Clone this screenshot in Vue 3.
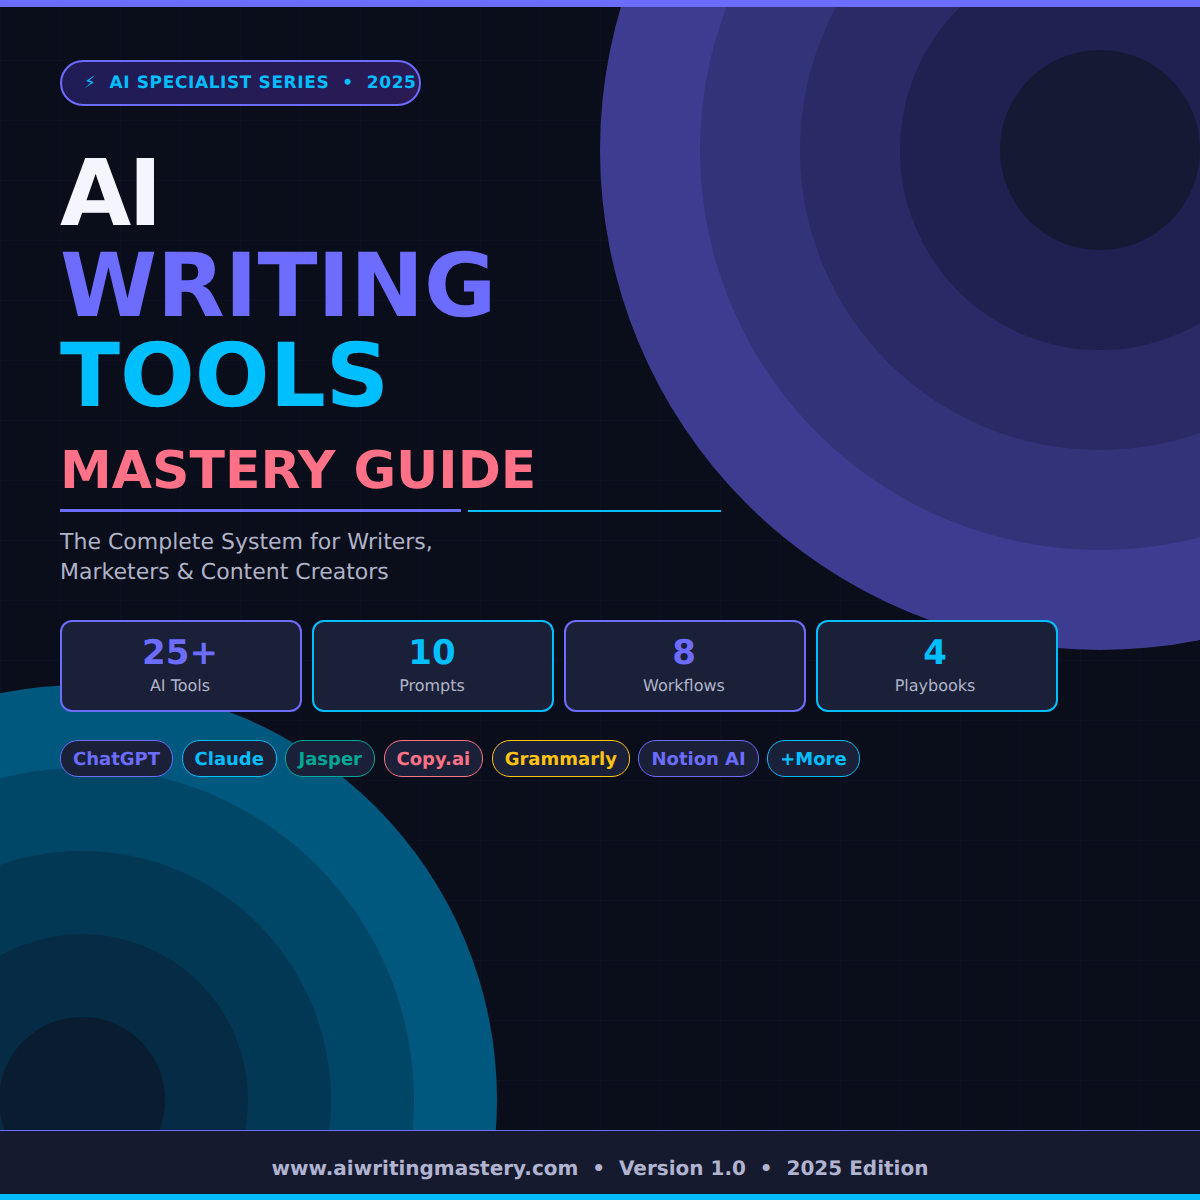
<template>
  <div class="poster">
    <div class="rings rings-purple">
      <div v-for="r in purpleRings" :key="r.size" class="ring" :style="ringStyle(r)"></div>
    </div>
    <div class="rings rings-teal">
      <div v-for="r in tealRings" :key="r.size" class="ring" :style="ringStyle(r)"></div>
    </div>

    <div class="top-bar"></div>

    <main class="content">
      <div class="badge">⚡&nbsp; AI SPECIALIST SERIES &nbsp;•&nbsp; 2025</div>

      <h1 class="title">
        <span class="t-white">AI</span>
        <span class="t-purple">WRITING</span>
        <span class="t-cyan">TOOLS</span>
      </h1>
      <h2 class="subtitle">MASTERY GUIDE</h2>

      <div class="rule">
        <span class="rule-a"></span>
        <span class="rule-b"></span>
      </div>

      <p class="desc">The Complete System for Writers,<br />Marketers &amp; Content Creators</p>

      <div class="stats">
        <div v-for="s in stats" :key="s.label" class="stat" :class="s.tone">
          <div class="stat-num">{{ s.num }}</div>
          <div class="stat-label">{{ s.label }}</div>
        </div>
      </div>

      <div class="tags">
        <span v-for="t in tags" :key="t.name" class="tag" :class="t.tone">{{ t.name }}</span>
      </div>
    </main>

    <footer class="footer">www.aiwritingmastery.com &nbsp;•&nbsp; Version 1.0 &nbsp;•&nbsp; 2025 Edition</footer>
    <div class="bottom-bar"></div>
  </div>
</template>

<script setup>
const purpleRings = [
  { size: 1000, color: '#3e3c90' },
  { size: 800, color: '#333379' },
  { size: 600, color: '#2a2a66' },
  { size: 400, color: '#1f2150' },
  { size: 200, color: '#151934' }
];

const tealRings = [
  { size: 830, color: '#00587f' },
  { size: 664, color: '#004666' },
  { size: 498, color: '#033855' },
  { size: 332, color: '#062b44' },
  { size: 166, color: '#0a1c30' }
];

const ringStyle = (r) => ({
  width: r.size + 'px',
  height: r.size + 'px',
  background: r.color
});

const stats = [
  { num: '25+', label: 'AI Tools', tone: 'purple' },
  { num: '10', label: 'Prompts', tone: 'cyan' },
  { num: '8', label: 'Workflows', tone: 'purple' },
  { num: '4', label: 'Playbooks', tone: 'cyan' }
];

const tags = [
  { name: 'ChatGPT', tone: 'purple' },
  { name: 'Claude', tone: 'cyan' },
  { name: 'Jasper', tone: 'green' },
  { name: 'Copy.ai', tone: 'red' },
  { name: 'Grammarly', tone: 'yellow' },
  { name: 'Notion AI', tone: 'purple' },
  { name: '+More', tone: 'cyan' }
];
</script>

<style scoped>
.poster {
  position: relative;
  width: 1200px;
  height: 1200px;
  overflow: hidden;
  display: flex;
  flex-direction: column;
  background-color: #0a0d1a;
  background-image:
    linear-gradient(rgba(108, 108, 255, 0.03) 1px, transparent 1px),
    linear-gradient(90deg, rgba(108, 108, 255, 0.03) 1px, transparent 1px);
  background-size: 60px 60px;
  font-family: "DejaVu Sans", sans-serif;
  text-rendering: geometricPrecision;
}

.rings {
  position: absolute;
  width: 0;
  height: 0;
}

.rings-purple {
  left: 1100px;
  top: 150px;
}

.rings-teal {
  left: 82px;
  top: 1100px;
}

.ring {
  position: absolute;
  border-radius: 50%;
  transform: translate(-50%, -50%);
}

.top-bar {
  position: relative;
  height: 7px;
  background: #6c6cff;
  flex-shrink: 0;
}

.content {
  position: relative;
  flex: 1;
  padding: 53px 60px 0;
}

.badge {
  box-sizing: border-box;
  width: 361px;
  height: 46px;
  display: flex;
  align-items: center;
  padding-left: 22px;
  border: 2px solid #6c6cff;
  border-radius: 23px;
  background: linear-gradient(90deg, #1f1c55, #2a1a55);
  color: #00bfff;
  font-size: 17px;
  font-weight: 700;
  letter-spacing: 0.6px;
  white-space: nowrap;
}

.title {
  margin: 42px 0 0;
  font-size: 88px;
  font-weight: 700;
  line-height: 90px;
}

.title span {
  display: block;
}

.t-white {
  margin-bottom: 1px;
  color: #f5f5ff;
  font-size: 92px;
  line-height: 92px;
  letter-spacing: -3px;
}

.t-purple {
  color: #6c6cff;
}

.t-cyan {
  color: #00bfff;
}

.subtitle {
  margin: 20px 0 0;
  color: #ff7186;
  font-size: 52px;
  font-weight: 700;
  line-height: 61px;
}

.rule {
  display: flex;
  align-items: center;
  gap: 7px;
  margin-top: 7px;
  height: 3px;
}

.rule-a {
  width: 401px;
  height: 3px;
  background: #6c6cff;
}

.rule-b {
  width: 253px;
  height: 2px;
  background: #00bfff;
}

.desc {
  margin: 16px 0 0;
  color: #b0b4c8;
  font-size: 22px;
  line-height: 30px;
}

.stats {
  display: flex;
  gap: 10px;
  margin-top: 32px;
}

.stat {
  box-sizing: border-box;
  width: 242px;
  height: 92px;
  padding: 10px 2px 0 0;
  border: 2px solid;
  border-radius: 12px;
  background: #1a2038;
  text-align: center;
}

.stat:last-child {
  padding-right: 4px;
}

.stat.purple {
  border-color: #6c6cff;
  color: #6c6cff;
}

.stat.cyan {
  border-color: #00bfff;
  color: #00bfff;
}

.stat-num {
  margin-top: 1px;
  font-size: 34px;
  font-weight: 700;
  line-height: 40px;
}

.stat-label {
  margin-top: 3px;
  color: #b0b4c8;
  font-size: 16px;
  line-height: 20px;
}

.tags {
  display: flex;
  gap: 8.5px;
  margin-top: 28px;
}

.tag {
  box-sizing: border-box;
  height: 37px;
  padding: 2px 12px 0;
  display: flex;
  align-items: center;
  border: 1px solid;
  border-radius: 18px;
  background: #1a2038;
  font-size: 18px;
  font-weight: 700;
}

.tag.purple {
  color: #6c6cff;
  border-color: #6c6cff;
}

.tag.cyan {
  color: #00bfff;
  border-color: #00bfff;
}

.tag.green {
  color: #00a896;
  border-color: #00a896;
}

.tag.red {
  color: #ff7186;
  border-color: #ff7186;
}

.tag.yellow {
  color: #ffc312;
  border-color: #ffc312;
}

.footer {
  position: relative;
  box-sizing: border-box;
  height: 64px;
  flex-shrink: 0;
  display: flex;
  align-items: center;
  justify-content: center;
  padding-top: 10px;
  border-top: 1px solid #6c6cff;
  background: #161a2f;
  color: #b0b4d0;
  font-size: 20px;
  font-weight: 700;
  white-space: pre;
}

.bottom-bar {
  position: relative;
  height: 6px;
  background: #00bfff;
  flex-shrink: 0;
}
</style>
